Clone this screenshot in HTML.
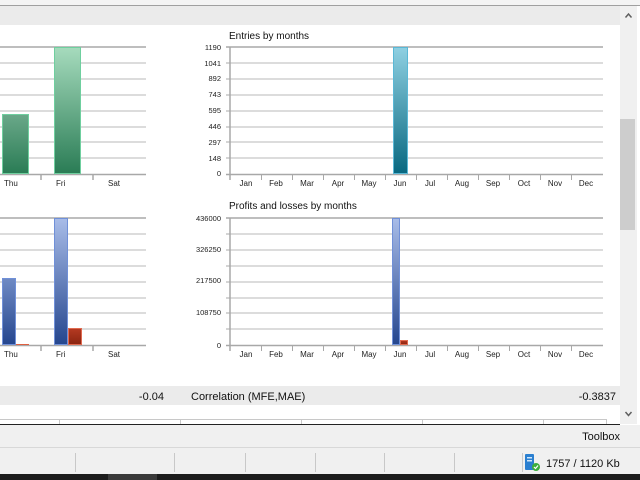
<!DOCTYPE html>
<html><head><meta charset="utf-8"><style>
html,body{margin:0;padding:0;width:640px;height:480px;overflow:hidden;background:#fff;font-family:"Liberation Sans",sans-serif}
svg text{font-family:"Liberation Sans",sans-serif}
</style></head><body>
<svg width="640" height="480" xmlns="http://www.w3.org/2000/svg">
<defs>
<linearGradient id="g" x1="0" y1="0" x2="0" y2="1"><stop offset="0" stop-color="#a6dbbd"/><stop offset="1" stop-color="#2a7c55"/></linearGradient>
<linearGradient id="g2" x1="0" y1="0" x2="0" y2="1"><stop offset="0" stop-color="#6aa889"/><stop offset="1" stop-color="#2a7c55"/></linearGradient>
<linearGradient id="c" x1="0" y1="0" x2="0" y2="1"><stop offset="0" stop-color="#8fd0e2"/><stop offset="1" stop-color="#086880"/></linearGradient>
<linearGradient id="b" x1="0" y1="0" x2="0" y2="1"><stop offset="0" stop-color="#a8bce8"/><stop offset="1" stop-color="#25468e"/></linearGradient>
<linearGradient id="b2" x1="0" y1="0" x2="0" y2="1"><stop offset="0" stop-color="#6f8ac4"/><stop offset="1" stop-color="#25468e"/></linearGradient>
<linearGradient id="r" x1="0" y1="0" x2="0" y2="1"><stop offset="0" stop-color="#b53a22"/><stop offset="1" stop-color="#8a2410"/></linearGradient>
</defs>
<rect x="0" y="0" width="640" height="6" fill="#f4f4f4"/>
<rect x="0" y="5" width="640" height="1" fill="#a0a0a0"/>
<rect x="0" y="6" width="620" height="19" fill="#ebebeb"/>
<rect x="620" y="6" width="17" height="418" fill="#f0f0f0"/>
<rect x="620" y="119" width="15" height="111" fill="#cdcdcd"/>
<path d="M625.5 17.5 L628.5 14 L631.5 17.5" stroke="#606060" stroke-width="1.5" fill="none"/>
<path d="M625.5 412 L628.5 415.5 L631.5 412" stroke="#606060" stroke-width="1.5" fill="none"/>

<g stroke-width="1.5">
<g stroke="#d0d0d0"><path d="M0 63H146M0 79H146M0 95H146M0 111H146M0 127H146M0 142H146M0 158H146"/></g>
<g stroke="#a8a8a8"><path d="M0 47H146M0 174.5H146M41 174V180M93 174V180"/></g>
<g stroke="#d0d0d0"><path d="M230 63H603M230 79H603M230 95H603M230 111H603M230 127H603M230 142H603M230 158H603"/></g>
<g stroke="#a8a8a8"><path d="M226 47H603M230 47V180M226 174.5H603"/></g>
<g stroke="#d0d0d0"><path d="M0 234H146M0 250H146M0 266H146M0 282H146M0 298H146M0 313H146M0 329H146"/></g>
<g stroke="#a8a8a8"><path d="M0 218H146M0 345.5H146M41 345V351M93 345V351"/></g>
<g stroke="#d0d0d0"><path d="M230 234H603M230 250H603M230 266H603M230 282H603M230 298H603M230 313H603M230 329H603"/></g>
<g stroke="#a8a8a8"><path d="M226 218H603M230 218V351M226 345.5H603"/></g>
</g>
<g stroke="#a8a8a8" stroke-width="1">
<path d="M261.5 174V180M292.5 174V180M323.5 174V180M354.5 174V180M385.5 174V180M416.5 174V180M447.5 174V180M478.5 174V180M509.5 174V180M540.5 174V180M571.5 174V180"/>
<path d="M261.5 345V351M292.5 345V351M323.5 345V351M354.5 345V351M385.5 345V351M416.5 345V351M447.5 345V351M478.5 345V351M509.5 345V351M540.5 345V351M571.5 345V351"/>
<path d="M226 63H230M226 79H230M226 95H230M226 111H230M226 127H230M226 142H230M226 158H230"/>
<path d="M226 234H230M226 250H230M226 266H230M226 282H230M226 298H230M226 313H230M226 329H230"/>
</g>

<rect x="2.5" y="114.5" width="26" height="59" fill="url(#g2)" stroke="#6fcf9f"/>
<rect x="54.5" y="47.5" width="26" height="126" fill="url(#g)" stroke="#6fcf9f"/>
<rect x="393.5" y="47.5" width="14" height="126" fill="url(#c)" stroke="#5ab8d6"/>
<rect x="2.5" y="278.5" width="13" height="66" fill="url(#b2)" stroke="#7090d8"/>
<rect x="16" y="344" width="13" height="1" fill="#e06040"/>
<rect x="54.5" y="218.5" width="13" height="126" fill="url(#b)" stroke="#7090d8"/>
<rect x="68.5" y="328.5" width="13" height="16" fill="url(#r)" stroke="#e06a50"/>
<rect x="392.5" y="218.5" width="7" height="126" fill="url(#b)" stroke="#7090d8"/>
<rect x="400.5" y="340.5" width="7" height="4" fill="url(#r)" stroke="#e06a50"/>

<g font-size="8" fill="#222">
<text x="4" y="186">Thu</text><text x="56" y="186">Fri</text><text x="108" y="186">Sat</text>
<text x="4" y="357">Thu</text><text x="56" y="357">Fri</text><text x="108" y="357">Sat</text>
</g>
<g font-size="8" fill="#222" text-anchor="middle">
<text x="246" y="186">Jan</text><text x="276" y="186">Feb</text><text x="307" y="186">Mar</text><text x="338" y="186">Apr</text><text x="369" y="186">May</text><text x="400" y="186">Jun</text><text x="430" y="186">Jul</text><text x="462" y="186">Aug</text><text x="493" y="186">Sep</text><text x="524" y="186">Oct</text><text x="555" y="186">Nov</text><text x="586" y="186">Dec</text>
<text x="246" y="357">Jan</text><text x="276" y="357">Feb</text><text x="307" y="357">Mar</text><text x="338" y="357">Apr</text><text x="369" y="357">May</text><text x="400" y="357">Jun</text><text x="430" y="357">Jul</text><text x="462" y="357">Aug</text><text x="493" y="357">Sep</text><text x="524" y="357">Oct</text><text x="555" y="357">Nov</text><text x="586" y="357">Dec</text>
</g>
<g font-size="7.5" fill="#222" text-anchor="end">
<text x="221" y="50">1190</text><text x="221" y="66">1041</text><text x="221" y="81">892</text><text x="221" y="97">743</text><text x="221" y="113">595</text><text x="221" y="129">446</text><text x="221" y="145">297</text><text x="221" y="161">148</text><text x="221" y="176">0</text>
<text x="221" y="221">436000</text><text x="221" y="252">326250</text><text x="221" y="283">217500</text><text x="221" y="315">108750</text><text x="221" y="348">0</text>
</g>
<text x="229" y="39" font-size="10" fill="#111">Entries by months</text>
<text x="229" y="209" font-size="10" fill="#111">Profits and losses by months</text>

<rect x="0" y="386" width="620" height="19" fill="#ebebeb"/>
<g font-size="11" fill="#111">
<text x="164" y="400" text-anchor="end">-0.04</text>
<text x="191" y="400">Correlation (MFE,MAE)</text>
<text x="616" y="400" text-anchor="end">-0.3837</text>
</g>
<g stroke="#c8c8c8"><path d="M0 419.5H606M59.5 419V424M180.5 419V424M301.5 419V424M422.5 419V424M543.5 419V424M606.5 419V424"/></g>
<rect x="0" y="424" width="620" height="1.5" fill="#222"/>
<rect x="0" y="425" width="640" height="23" fill="#f0f0f0"/>
<text x="620" y="440" font-size="11" fill="#111" text-anchor="end">Toolbox</text>
<rect x="0" y="447" width="640" height="1" fill="#d8d8d8"/>
<rect x="0" y="448" width="640" height="26" fill="#f0f0f0"/>
<g stroke="#c8c8c8"><path d="M75.5 453V472M174.5 453V472M245.5 453V472M315.5 453V472M384.5 453V472M454.5 453V472M522.5 453V472"/></g>
<rect x="525" y="454" width="9" height="16" rx="1" fill="#2a7fd0"/>
<rect x="527" y="457" width="5" height="1.5" fill="#cfe6fa"/>
<rect x="527" y="460" width="5" height="1.5" fill="#cfe6fa"/>
<circle cx="536" cy="467" r="4" fill="#3cae3c"/>
<path d="M534 467l1.5 1.5 2.5-3" stroke="#fff" stroke-width="1.2" fill="none"/>
<text x="546" y="467" font-size="11" fill="#111">1757 / 1120 Kb</text>
<rect x="0" y="474" width="640" height="6" fill="#1c1c1c"/>
<rect x="108" y="474" width="49" height="6" fill="#3a3a3a"/>
</svg>
</body></html>
